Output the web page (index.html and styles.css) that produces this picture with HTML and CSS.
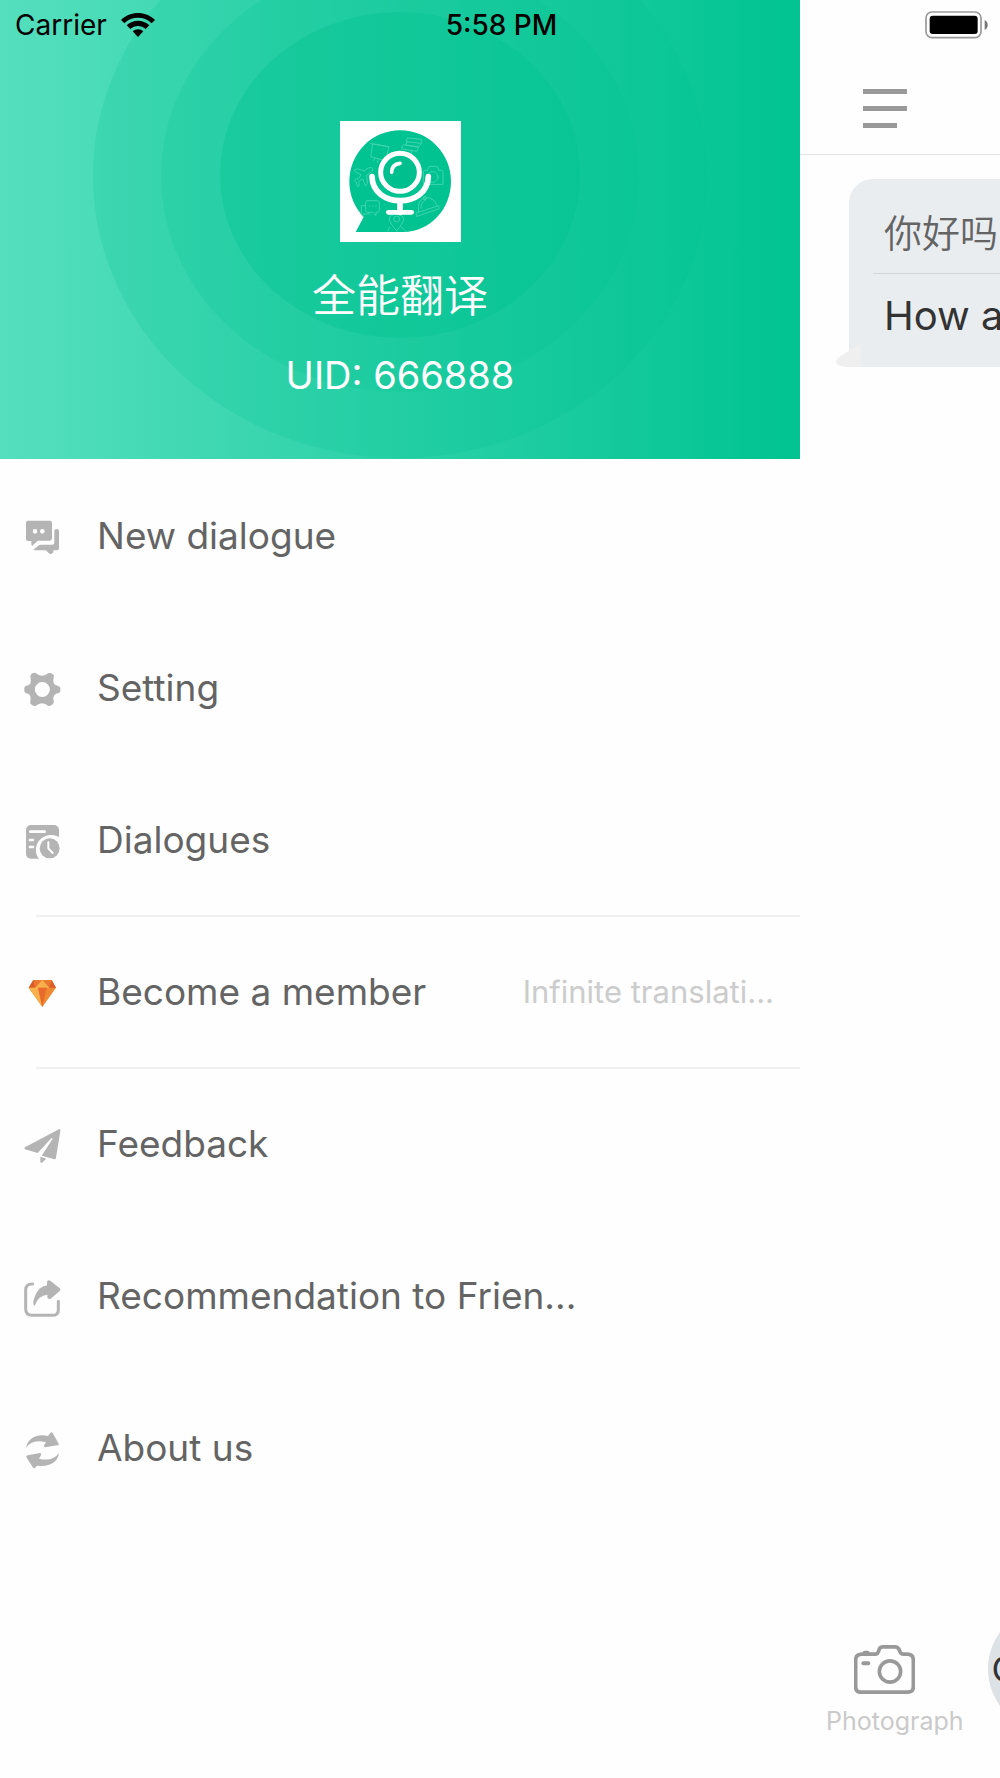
FILE: index.html
```html
<!DOCTYPE html>
<html lang="en">
<head>
<meta charset="utf-8">
<meta name="viewport" content="width=device-width, initial-scale=1">
<title>全能翻译</title>
<link rel="stylesheet" href="styles.css">
</head>
<body>
<div class="app">
  <div class="status">
    <div class="status-left">
      <span>Carrier</span>
      <svg class="wifi" viewBox="0 0 102 72" aria-label="Wi-Fi">
        <path d="M0 21C28-7 74-7 102 21L92 31C69 9 33 9 10 31Z"/>
        <path d="M17 37C36 19 66 19 85 37L74 48C61 36 41 36 28 48Z"/>
        <path d="M35 55C44 47 58 47 67 55L51 72Z"/>
      </svg>
    </div>
    <span class="clock">5:58 PM</span>
    <svg class="battery" viewBox="0 0 189 84" aria-label="Battery full">
      <rect x="3" y="3" width="165" height="77" rx="18" fill="#fff" stroke="#999" stroke-width="5"/>
      <rect x="14" y="14" width="144" height="55" rx="9"/>
      <path d="M179 27Q188 32 188 42Q188 52 179 57Z" fill="#777"/>
    </svg>
  </div>

  <aside class="drawer">
    <header class="profile">
      <svg class="rings" viewBox="0 0 800 459" preserveAspectRatio="none" aria-hidden="true">
        <ellipse cx="400" cy="176" rx="307" ry="282"/>
        <ellipse cx="400" cy="176" rx="239" ry="216"/>
        <ellipse class="ring-inner" cx="400" cy="175" rx="180" ry="163"/>
      </svg>
      <svg class="avatar" viewBox="60 33 363 363" aria-label="全能翻译">
        <path fill="#fff" d="M60 33h363v363H60z"/>
        <path fill="#00c391" d="M107 366L131 321C105 294 88 258 88 214A152 153 0 0 1 393 214C393 300 328 366 250 366Z"/>
        <g fill="none" stroke="#3fd4ae" stroke-width="3" stroke-linejoin="round" stroke-linecap="round">
          <path d="M158 102l-6 38 45 12 9-40zM151 101l56 9M165 144l-5 8M189 150l10 9M175 148l-3 10"/>
          <path d="M263 84l43 4-4 12-43-5zM262 95l-5 10 39 5 11-12M251 104l45 8-6 12-44-7zM275 121l-1 12"/>
          <path d="M104 180q4-5 11-3l18 6 12-9q9-4 13 1 2 6-5 11l-13 9 2 24q0 6-6 9l-8-22-12 9 2 12-5 3-5-14-5-3 4-5 8-2 8-12-17-8q-4-3-2-6z"/>
          <path d="M310 222v-37q0-4 4-4h8l6-12h24l4 12h9q4 0 4 4v37z"/><circle cx="338" cy="201" r="16"/>
          <path d="M142 272h31q5 0 5 5v24q0 6-5 6h-5v10l-10-10h-16q-5 0-5-6v-24q0-5 5-5zM137 287h-13v26l5 6v-7h20"/>
          <path d="M147 288h2M157 288h2M167 288h2" />
          <path d="M291 319l67-23-3-9-66 22zM296 305q-7-37 22-42 24-1 33 24M303 295q-2-19 13-24"/><circle cx="315" cy="264" r="5"/>
          <path d="M230 363q-25-29-22-39 3-11 22-11t21 15q-2 12-21 35z"/><circle cx="230" cy="327" r="9"/><path d="M242 350l15 12M209 351l-5 12"/>
        </g>
        <g fill="none" stroke="#fff" stroke-linecap="round">
          <ellipse cx="240" cy="187" rx="58" ry="57" stroke-width="15" fill="#00bf8e"/>
          <path stroke-width="17" d="M156 200C158 296 323 296 325 200M240 272V307"/>
          <path stroke-width="14" d="M205 307h70"/>
          <path stroke-width="11" d="M215 187Q215 163 240 160"/>
        </g>
      </svg>
      <h1 class="name" lang="zh">全能翻译</h1>
      <p class="uid">UID: 666888</p>
    </header>

    <nav class="menu">
      <a class="item" href="#new">
        <svg class="icon" viewBox="0 0 108 108" aria-hidden="true">
          <path fill-rule="evenodd" d="M12 5h65q7 0 7 7v46q0 7-7 7H41L25 80q-3 0-3-4V66H12q-6 0-6-7V12q0-7 6-7zM33 30a7 7 0 1 0 0 14a7 7 0 1 0 0-14zM55 30a7 7 0 1 0 0 14a7 7 0 1 0 0-14z"/>
          <path d="M91 36q0-6 7-6t7 6v52q0 6-6 6H88v6q-7 9-15 1l-7-7H30q-2-1 0-3l15-12q3-2 6-2h34q6 0 6-6z"/>
        </svg>
        <span class="label">New dialogue</span>
      </a>
      <a class="item" href="#setting">
        <svg class="icon" viewBox="0 0 108 108" aria-hidden="true">
          <path fill-rule="evenodd" d="M27 6Q34 4 39 9Q54 19 69 9Q75 4 82 7L88 11Q92 14 89 21C86 33 89 42 101 44Q109 46 109 51V60Q109 65 102 67C91 68 86 77 89 90Q91 96 86 100L79 104Q73 107 68 101Q54 92 40 101Q35 107 28 104L21 100Q17 97 19 91C22 78 18 68 7 67Q1 65 1 60V51Q1 46 6 44C18 43 22 35 20 23Q17 14 22 9ZM55 33a22 22 0 1 0 0 45a22 22 0 1 0 0-45z"/>
        </svg>
        <span class="label">Setting</span>
      </a>
      <a class="item" href="#dialogues">
        <svg class="icon" viewBox="0 0 108 108" aria-hidden="true">
          <rect x="6" y="6" width="99" height="101" rx="15"/>
          <path fill="none" stroke="#fefefe" stroke-width="8" stroke-linecap="round" d="M19 26h43M18 51h9M18 72h9"/>
          <path fill="#fefefe" d="M46 109C34 95 32 75 42 58C57 34 88 30 108 44V109Z"/>
          <circle cx="77" cy="76" r="30"/>
          <path fill="none" stroke="#fefefe" stroke-width="6" stroke-linecap="round" d="M73 58v18l13 14"/>
        </svg>
        <span class="label">Dialogues</span>
      </a>
      <a class="item ruled" href="#member">
        <svg class="icon" viewBox="0 0 108 108" aria-hidden="true">
          <path fill="#ee8a33" d="M28 15h55l13 23-41 58-41-58z"/>
          <path fill="#dd5a2a" d="M28 15L14 38H34ZM83 15L96 38H76Z"/>
          <path fill="#f7b04a" d="M14 38H42L55 96ZM55 15L34 38H76Z"/>
          <path fill="#e8662c" d="M28 15L34 38 51 17ZM83 15L76 38 59 17Z" opacity=".55"/>
          <path fill="#ea6a2b" d="M42 38H68L55 96Z"/>
        </svg>
        <span class="label">Become a member</span>
        <span class="note">Infinite translati...</span>
      </a>
      <a class="item ruled" href="#feedback">
        <svg class="icon" viewBox="0 0 108 108" aria-hidden="true">
          <path d="M106 6q4 0 3 6L96 92q-1 6-7 4L53 86 86 35Q86 31 82 34L41 78 3 67Q-1 64 3 61ZM49 89l18 6-13 12q-5 2-5-3z"/>
        </svg>
        <span class="label">Feedback</span>
      </a>
      <a class="item" href="#recommend">
        <svg class="icon" viewBox="0 0 108 108" aria-hidden="true">
          <path fill="none" stroke="#b4b4b4" stroke-width="9" stroke-linecap="round" d="M26 15Q5 14 5 33V90Q5 109 24 109H85Q103 109 103 92V67"/>
          <path d="M32 80Q24 78 31 56 43 22 69 19V9q2-8 10-4l28 23q4 4 0 8L80 59q-9 3-10-5V47Q43 49 32 80Z"/>
        </svg>
        <span class="label">Recommendation to Frien...</span>
      </a>
      <a class="item" href="#about">
        <svg class="icon" viewBox="0 0 108 108" aria-hidden="true">
          <path d="M6 50C12 23 35 7 72 15L79 6q5-5 7 0L104 38q1 6-4 5L64 49q-6-1-3-7l5-8Q25 22 6 50ZM105 66C101 94 76 109 39 104L34 110q-7 4-8-2L8 80q-3-6 4-7L48 66q6 1 3 6l-6 11Q86 93 105 66Z"/>
        </svg>
        <span class="label">About us</span>
      </a>
    </nav>
  </aside>

  <main class="chat">
    <div class="topbar">
      <button class="burger" type="button" aria-label="Menu">
        <svg viewBox="0 0 44 40" aria-hidden="true"><path d="M0 0h44v5H0zM0 17h44v5H0zM0 34h34v5H0z"/></svg>
      </button>
    </div>
    <div class="messages">
      <article class="bubble">
        <p class="source" lang="zh">你好吗</p>
        <p class="target">How are you?</p>
        <svg class="tail" viewBox="0 0 75 72" aria-hidden="true"><path d="M75 0V72H30Q0 70 0 54 3 45 14 39Z"/></svg>
      </article>
    </div>
    <div class="toolbar">
      <button class="photo" type="button">
        <svg viewBox="0 0 183 146" aria-hidden="true">
          <path d="M24 27H64Q71 27 73 20L76 11Q79 5 87 5H123Q131 5 134 11L138 20Q142 27 148 27H160Q178 28 178 44V125Q178 141 162 141H20Q5 141 5 125V44Q5 28 24 27Z"/>
          <circle cx="108" cy="79" r="32"/>
          <path d="M28 54h15M32 23h9" stroke-width="12"/>
        </svg>
        <span>Photograph</span>
      </button>
      <button class="lang" type="button">Chinese</button>
    </div>
  </main>
</div>
</body>
</html>
```
FILE: styles.css
```css
* { box-sizing: border-box; }

body {
  margin: 0;
  background: #fefefe;
  color: #646464;
  font-family: Inter, "Noto Sans CJK SC", sans-serif;
}

h1, p { margin: 0; font-weight: 400; }

p:lang(zh), h1:lang(zh) { font-weight: 350; }

button {
  margin: 0;
  padding: 0;
  border: 0;
  background: none;
  font: inherit;
}

.app {
  position: relative;
  display: grid;
  grid-template-columns: 80% 20%;
  min-height: 100vh;
  overflow: hidden;
}

/* Status bar floats over both panes */
.status {
  position: absolute;
  inset: 0 0 auto;
  z-index: 2;
  display: grid;
  grid-template-columns: 1fr auto 1fr;
  align-items: center;
  height: 50px;
  padding: 0 12px 0 15px;
  color: #000;
  font-size: 28px;
  line-height: 32px;
}

.status-left { display: flex; align-items: center; gap: 14px; }
.wifi { width: 34px; height: 24px; }
.clock { font-weight: 500; }
.battery { justify-self: end; width: 63px; height: 28px; }

.drawer { min-width: 0; }

.profile {
  position: relative;
  display: flex;
  flex-direction: column;
  align-items: center;
  height: 459px;
  padding-top: 121px;
  background: linear-gradient(90deg, #55dfbe, #00c391);
  color: #fff;
}

.rings { position: absolute; inset: 0; width: 100%; height: 100%; fill: #00c391; fill-opacity: .18; }
.ring-inner { fill-opacity: .36; }
.avatar { position: relative; width: 121px; height: 121px; }
.name { position: relative; margin-top: 24px; font-size: 44px; line-height: 60px; }
.uid { position: relative; margin-top: 25px; font-size: 38px; line-height: 48px; }

.item {
  display: flex;
  align-items: center;
  height: 152px;
  padding: 2px 26px 0 24px;
  color: #646464;
  font-size: 37px;
  line-height: 48px;
  text-decoration: none;
  white-space: nowrap;
}

.ruled {
  background: linear-gradient(#f0f0f0, #f0f0f0) 36px 0 / 100% 2px no-repeat;
}

.icon { width: 36px; height: 36px; margin: 2px 37px 0 0; fill: #b4b4b4; overflow: visible; }
.note { margin-left: auto; color: #ccc; font-size: 31px; }

.chat {
  display: flex;
  flex-direction: column;
  min-width: 0;
  overflow: hidden;
}

.topbar {
  height: 155px;
  padding: 89px 0 0 63px;
  border-bottom: 1px solid #e4e4e4;
}

.burger { display: block; width: 44px; height: 40px; }
.burger svg { display: block; fill: #999; }

.messages { padding: 24px 0 0 49px; }

.bubble {
  position: relative;
  width: 320px;
  padding: 24px 24px 21px;
  border-radius: 24px 24px 24px 0;
  background: #e9edf0;
  white-space: nowrap;
}

.source, .target { padding-left: 11px; line-height: 60px; }
.source { padding-bottom: 10px; border-bottom: 1px solid #d2d6d9; font-size: 38px; }
.target { margin-top: 12px; color: #333; font-size: 40px; }
.tail { position: absolute; left: -13px; bottom: 0; width: 25px; height: 24px; fill: #efefef; }

.toolbar {
  display: flex;
  align-items: flex-start;
  gap: 24px;
  margin-top: auto;
  padding: 0 0 42px 26px;
}

.photo { display: grid; justify-items: center; gap: 12px; margin-top: 39px; color: #cacaca; font-size: 25px; line-height: 30px; }
.photo svg { width: 61px; height: 49px; margin-right: 20px; fill: none; stroke: #999; stroke-width: 11; stroke-linecap: round; stroke-linejoin: round; }

.lang {
  flex: none;
  width: 126px;
  height: 126px;
  padding-left: 4px;
  border-radius: 50%;
  background: #dde2e6;
  color: #333;
  font-size: 36px;
  text-align: left;
}
```
